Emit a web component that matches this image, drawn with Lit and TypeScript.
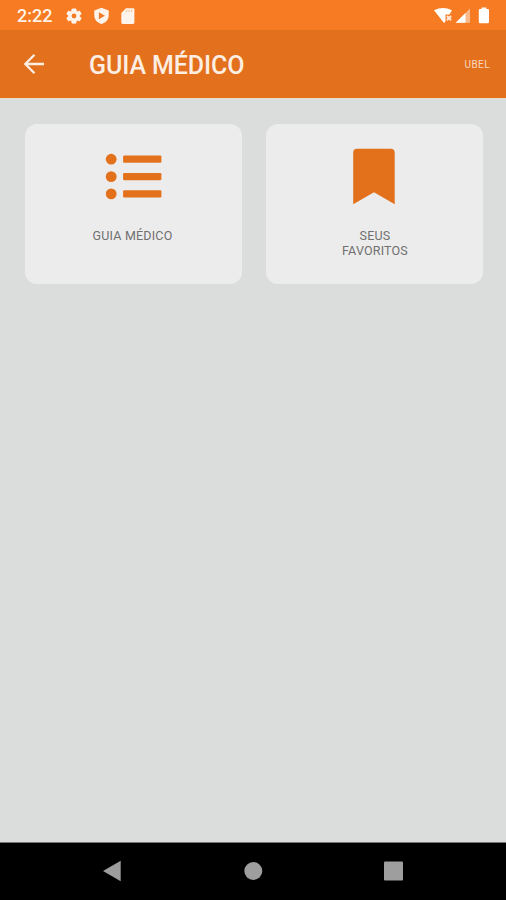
import { LitElement, html, css, svg } from "lit";
import { customElement } from "lit/decorators.js";

const listIcon = svg`<svg class="icon" width="58" height="58" viewBox="0 0 58 58" fill="#e3701a">
  <circle cx="6.2" cy="11.2" r="5.4"/><circle cx="6.2" cy="28.6" r="5.4"/><circle cx="6.2" cy="45.9" r="5.4"/>
  <rect x="18.1" y="7.6" width="38.3" height="7.2" rx="1.2"/>
  <rect x="18.1" y="25" width="38.3" height="7.2" rx="1.2"/>
  <rect x="18.1" y="42.3" width="38.3" height="7.2" rx="1.2"/>
</svg>`;

const bookmarkIcon = svg`<svg class="icon" width="58" height="58" viewBox="0 0 58 58" fill="#e3701a">
  <path d="M11 .8H44.700Q48.700 .8 48.700 4.800V56.300L28 44.200L7.200 56.300V4.800Q7.200 .8 11 .8Z"/>
</svg>`;

@customElement("app-root")
export class AppRoot extends LitElement {
  static styles = css`
    :host { display: flex; flex-direction: column; width: 506px; height: 900px; overflow: hidden; background: #dadddc; font-family: Roboto, "Liberation Sans", sans-serif; }
    svg { display: block; flex: none; }
    .status { height: 30px; flex: none; display: flex; align-items: center; background: #f67b22; color: #fff; box-sizing: border-box; padding: 2px 16px 0 17px; }
    .clock { width: 48px; font-size: 18px; font-weight: 500; line-height: 28px; color: #fff3e8; }
    .left, .right { display: flex; align-items: center; }
    .left { gap: 10px; }
    .right { margin-left: auto; }
    .bar { height: 69px; flex: none; display: flex; align-items: center; background: #e3701c; border-bottom: 1px solid #e6dccb; box-sizing: border-box; padding: 0 16px 0 22px; color: #fdeee3; }
    h1 { margin: 4px 0 0 43px; font-size: 25px; line-height: 30px; font-weight: 500; letter-spacing: -0.1px; white-space: nowrap; }
    .user { margin: 2px 0 0 auto; font-size: 10px; line-height: 12px; letter-spacing: 0.4px; color: #fbd9bf; }
    main { flex: 1; display: grid; grid-template-columns: 217px 217px; grid-auto-rows: 160px; column-gap: 24px; padding: 25px 0 0 25px; }
    .card { display: flex; flex-direction: column; align-items: center; background: #ececec; border-radius: 12px; box-sizing: border-box; padding-top: 24px; }
    .label { margin: 22px 2px 0 0; width: 90px; text-align: center; font-size: 12.5px; line-height: 15px; letter-spacing: 0.2px; color: #707070; }
    .card + .card .label { margin-right: 0; margin-left: 1px; }
    nav { height: 58px; flex: none; background: #000; border-top: 1px solid #777; box-sizing: border-box; display: flex; align-items: center; justify-content: space-between; padding: 0 102px 2px; }
  `;

  private card(icon: unknown, label: string) {
    return html`<section class="card">${icon}<div class="label">${label}</div></section>`;
  }

  render() {
    return html`
      <div class="status">
        <span class="clock">2:22</span>
        <div class="left">
          <svg width="18" height="18" viewBox="0 0 24 24"><path fill="#fff4eb" stroke="#fff4eb" stroke-width="1" stroke-linejoin="round" d="M19.400 13a7.500 7.500 0 0 0 0-2l2.300-1.700-2.300-4-2.700 1.100a7.500 7.500 0 0 0-1.700-1L14.600 2.500H9.400L9 5.400a7.500 7.500 0 0 0-1.700 1L4.600 5.300l-2.300 4L4.600 11a7.500 7.500 0 0 0 0 2l-2.300 1.700 2.300 4 2.700-1.100a7.500 7.500 0 0 0 1.700 1l.4 2.900h5.200l.4-2.900a7.500 7.500 0 0 0 1.700-1l2.700 1.100 2.300-4Z"/><circle cx="12" cy="12" r="3.200" fill="#f67b22"/></svg>
          <svg width="17" height="18" viewBox="0 0 17 18"><path fill="#fff4eb" d="M8.500 .8 15.700 3.400V8.500C15.700 12.700 12.500 15.900 8.500 17 4.500 15.900 1.300 12.700 1.300 8.500V3.400Z"/><path fill="#ee7b2b" d="M5.900 5.200 12 8.700 5.900 12.200Z"/></svg>
          <svg width="16" height="18" viewBox="0 0 16 18"><path fill="#fff4eb" d="M6 1.200H13Q14.400 1.200 14.400 2.600V15.500Q14.400 16.900 13 16.900H2.700Q1.300 16.900 1.300 15.500V6Z"/><path stroke="#f6bd92" stroke-width="1" d="M6.700 2.800v2.200M9.200 2.800v2.200M11.700 2.800v2.200"/></svg>
        </div>
        <div class="right">
          <svg width="56" height="18" viewBox="0 0 56 18">
            <path fill="#fff" d="M0 3.300Q9-1.500 18 3.300L15.500 7.500H11.500V14.500L10 16Z"/>
            <path stroke="#ffe9d8" stroke-width="2" d="m12.900 9 4.200 4.200m0-4.200-4.200 4.200"/>
            <path fill="#f9b98a" d="M36 1.500V15.800H21.700Z"/><path fill="#fff" d="M31.500 6V15.800H21.700Z"/>
            <path fill="#fff" d="M47.500 .5h4.800V2H54Q55 2 55 3V15Q55 16.200 54 16.200H46Q44.800 16.200 44.800 15V3Q44.800 2 46 2H47.500Z"/>
          </svg>
        </div>
      </div>
      <header class="bar">
        <svg width="24" height="24" viewBox="0 0 24 24" fill="none" stroke="#fdeee3" stroke-width="2.300"><path d="M22 12H3.500M12.500 2.800 3.300 12l9.200 9.200"/></svg>
        <h1>GUIA MÉDICO</h1>
        <span class="user">UBEL</span>
      </header>
      <main>
        ${this.card(listIcon, "GUIA MÉDICO")}
        ${this.card(bookmarkIcon, "SEUS FAVORITOS")}
      </main>
      <nav>
        <svg width="20" height="22" viewBox="0 0 20 22"><path fill="#9e9e9e" d="M1 11 18.700 .800V21.200Z"/></svg>
        <svg width="20" height="20" viewBox="0 0 20 20"><circle cx="10.300" cy="10" r="9" fill="#9e9e9e"/></svg>
        <svg width="20" height="20" viewBox="0 0 20 20"><rect x="0" y=".5" width="19" height="19" rx="1" fill="#9e9e9e"/></svg>
      </nav>`;
  }
}
